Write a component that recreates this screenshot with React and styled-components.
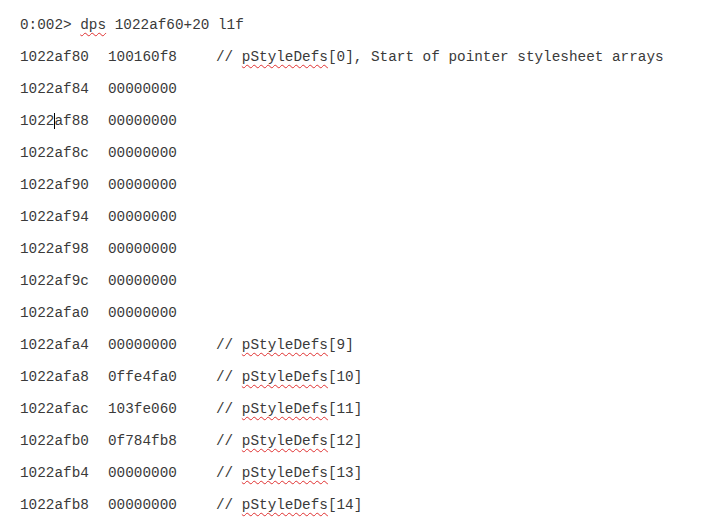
import React from "react";
import styled, { createGlobalStyle } from "styled-components";

const Global = createGlobalStyle`
  html, body { margin: 0; padding: 0; background: #ffffff; }
  body { font-family: "Liberation Mono", "Courier New", monospace; }
`;

const Page = styled.div`
  width: 712px;
  height: 530px;
  box-sizing: border-box;
  padding: 9px 0 0 20px;
  background: #ffffff;
  color: #3a3a3a;
  font-family: "Liberation Mono", "Courier New", monospace;
  font-size: 14.35px;
  line-height: 32px;
  overflow: hidden;
`;

const Line = styled.div`
  height: 32px;
  white-space: pre;
`;

const Row = styled.div`
  display: grid;
  grid-template-columns: 88px 108px auto;
  height: 32px;
  white-space: pre;
`;

const Squiggle = styled.span`
  text-decoration-line: underline;
  text-decoration-style: wavy;
  text-decoration-color: #e03030;
  text-decoration-thickness: 1px;
  text-underline-offset: 3px;
`;

const Caret = styled.span`
  display: inline-block;
  width: 1px;
  height: 16px;
  margin-right: -1px;
  background: #000000;
  vertical-align: -4px;
`;

const rows = [
  ["1022af80", "100160f8", "0", ", Start of pointer stylesheet arrays"],
  ["1022af84", "00000000"],
  ["1022af88", "00000000", null, null, true],
  ["1022af8c", "00000000"],
  ["1022af90", "00000000"],
  ["1022af94", "00000000"],
  ["1022af98", "00000000"],
  ["1022af9c", "00000000"],
  ["1022afa0", "00000000"],
  ["1022afa4", "00000000", "9", ""],
  ["1022afa8", "0ffe4fa0", "10", ""],
  ["1022afac", "103fe060", "11", ""],
  ["1022afb0", "0f784fb8", "12", ""],
  ["1022afb4", "00000000", "13", ""],
  ["1022afb8", "00000000", "14", ""],
];

export default function App() {
  return (
    <>
      <Global />
      <Page>
        <Line>
          0:002&gt; <Squiggle>dps</Squiggle> 1022af60+20 l1f
        </Line>
        {rows.map(([addr, val, idx, rest, caret]) => (
          <Row key={addr}>
            <span>
              {caret ? (
                <>
                  {addr.slice(0, 4)}
                  <Caret />
                  {addr.slice(4)}
                </>
              ) : (
                addr
              )}
            </span>
            <span>{val}</span>
            <span>
              {idx !== undefined && idx !== null ? (
                <>
                  // <Squiggle>pStyleDefs</Squiggle>[{idx}]{rest}
                </>
              ) : null}
            </span>
          </Row>
        ))}
      </Page>
    </>
  );
}
